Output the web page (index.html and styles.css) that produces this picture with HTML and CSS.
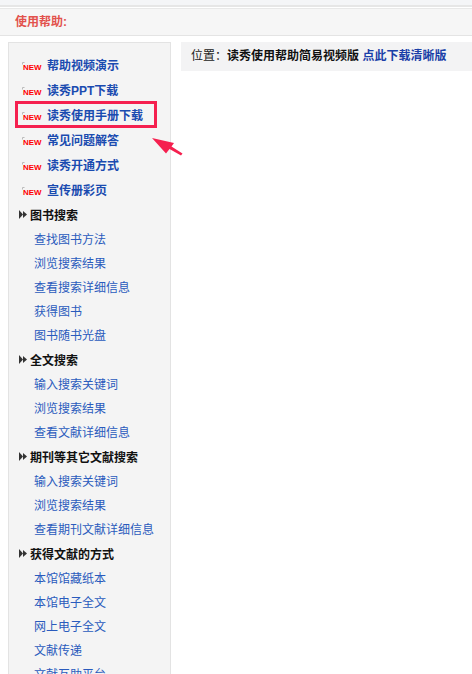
FILE: index.html
```html
<!DOCTYPE html>
<html lang="zh-CN">
<head>
<meta charset="utf-8">
<title>使用帮助</title>
<link rel="stylesheet" href="styles.css">
</head>
<body>
<div class="top-strip"></div>
<div class="title-bar">使用帮助:</div>
<div class="layout">
  <aside class="sidebar">
    <ul class="news">
      <li><svg class="new" viewBox="0 0 20 15"><path class="new-hook" d="M0.5 7.5V5.5H2.5"/><text x="1" y="13" textLength="18.5" lengthAdjust="spacingAndGlyphs">NEW</text></svg><a>帮助视频演示</a></li>
      <li><svg class="new" viewBox="0 0 20 15"><path class="new-hook" d="M0.5 7.5V5.5H2.5"/><text x="1" y="13" textLength="18.5" lengthAdjust="spacingAndGlyphs">NEW</text></svg><a>读秀PPT下载</a></li>
      <li class="marked"><svg class="new" viewBox="0 0 20 15"><path class="new-hook" d="M0.5 7.5V5.5H2.5"/><text x="1" y="13" textLength="18.5" lengthAdjust="spacingAndGlyphs">NEW</text></svg><a>读秀使用手册下载</a>
        <svg class="arrow" viewBox="0 0 31 18"><path d="M0 0L22 5L19.5 8.5L30.5 15.5L29 17.5L17.5 11L14 15.5Z"/></svg>
      </li>
      <li><svg class="new" viewBox="0 0 20 15"><path class="new-hook" d="M0.5 7.5V5.5H2.5"/><text x="1" y="13" textLength="18.5" lengthAdjust="spacingAndGlyphs">NEW</text></svg><a>常见问题解答</a></li>
      <li><svg class="new" viewBox="0 0 20 15"><path class="new-hook" d="M0.5 7.5V5.5H2.5"/><text x="1" y="13" textLength="18.5" lengthAdjust="spacingAndGlyphs">NEW</text></svg><a>读秀开通方式</a></li>
      <li><svg class="new" viewBox="0 0 20 15"><path class="new-hook" d="M0.5 7.5V5.5H2.5"/><text x="1" y="13" textLength="18.5" lengthAdjust="spacingAndGlyphs">NEW</text></svg><a>宣传册彩页</a></li>
    </ul>
    <section class="group">
      <h3><svg class="tri" viewBox="0 0 8 9"><path d="M0 0L4 4.5L0 9Z"/><path d="M4 1L8 4.5L4 8Z"/></svg>图书搜索</h3>
      <a>查找图书方法</a><a>浏览搜索结果</a><a>查看搜索详细信息</a><a>获得图书</a><a>图书随书光盘</a>
    </section>
    <section class="group">
      <h3><svg class="tri" viewBox="0 0 8 9"><path d="M0 0L4 4.5L0 9Z"/><path d="M4 1L8 4.5L4 8Z"/></svg>全文搜索</h3>
      <a>输入搜索关键词</a><a>浏览搜索结果</a><a>查看文献详细信息</a>
    </section>
    <section class="group">
      <h3><svg class="tri" viewBox="0 0 8 9"><path d="M0 0L4 4.5L0 9Z"/><path d="M4 1L8 4.5L4 8Z"/></svg>期刊等其它文献搜索</h3>
      <a>输入搜索关键词</a><a>浏览搜索结果</a><a>查看期刊文献详细信息</a>
    </section>
    <section class="group">
      <h3><svg class="tri" viewBox="0 0 8 9"><path d="M0 0L4 4.5L0 9Z"/><path d="M4 1L8 4.5L4 8Z"/></svg>获得文献的方式</h3>
      <a>本馆馆藏纸本</a><a>本馆电子全文</a><a>网上电子全文</a><a>文献传递</a><a>文献互助平台</a>
    </section>
  </aside>
  <main class="content">
    <div class="crumb">位置：<b>读秀使用帮助简易视频版</b> <a>点此下载清晰版</a></div>
  </main>
</div>
</body>
</html>
```
FILE: styles.css
```css
* { box-sizing: border-box; }
html, body { margin: 0; padding: 0; height: 674px; overflow: hidden; background: #fff; }
body { font-family: "Liberation Sans", "Noto Sans CJK SC", sans-serif; font-size: 12px; color: #222; }
.top-strip { height: 7px; background: #f4f5f7; border-bottom: 2px solid #e6e6e6; }
.title-bar {
  height: 28px; margin-top: 1px; padding-left: 15px;
  background: #f6f6f6; border-top: 1px solid #e8e8e8; border-bottom: 1px solid #e4e4e4;
  color: #e2524d; font-size: 12px; font-weight: bold; line-height: 26px;
}
.layout { display: flex; align-items: flex-start; gap: 10px; padding: 6px 0 0 8px; }
.sidebar {
  width: 163px; height: 700px; flex: none; padding-top: 9px;
  background: #f4f4f4; border: 1px solid #e3e3e3;
}
.news { list-style: none; margin: 0; padding: 0 0 1px; }
.news li { position: relative; display: flex; align-items: center; height: 25px; padding-left: 13px; }
.news a { color: #1a4bb0; font-weight: bold; }
.new { width: 20px; height: 15px; margin-right: 5px; flex: none; }
.new text { font-family: "Liberation Sans", sans-serif; font-size: 8px; font-weight: bold; fill: #f00; }
.new-hook { fill: none; stroke: #bbb; stroke-width: 1; }
.marked::before {
  content: ""; box-sizing: border-box; position: absolute; left: 6px; top: -1px; width: 142px; height: 27px;
  border: 3px solid #f5204f;
}
.arrow { position: absolute; left: 143px; top: 36px; width: 31px; height: 18px; fill: #f5204f; }
.group h3 { display: flex; align-items: center; height: 25px; margin: 0; padding: 0 0 2px 10px; font-size: 12px; font-weight: bold; color: #111; }
.group a { display: block; height: 24px; line-height: 24px; padding-left: 25px; color: #2a5bbd; }
.tri { width: 8px; height: 9px; margin-right: 3px; fill: #333; }
.content { flex: 1; }
.crumb { height: 29px; padding-left: 10px; background: #f3f3f4; line-height: 28px; white-space: nowrap; }
.crumb b { color: #111; }
.crumb a { color: #1a3fa8; font-weight: bold; }
```
